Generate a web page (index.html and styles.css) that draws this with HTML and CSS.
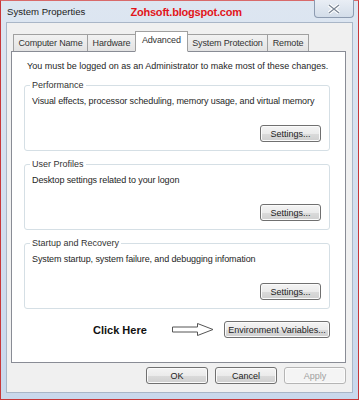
FILE: index.html
```html
<!DOCTYPE html>
<html>
    <head>
        <link rel="stylesheet" href="styles.css">
    </head>
    <body>
        <div class="window">
            <div class="titlebar">
                <span class="title">System Properties</span>
                <span class="brand">Zohsoft.blogspot.com</span>
                <span class="close">
                    <svg width="12" height="10" viewBox="0 0 12 10">
                        <path d="M1 1 L11 9 M11 1 L1 9" stroke="#fff" stroke-width="3.4"/>
                        <path d="M1 1 L11 9 M11 1 L1 9" stroke="#7a8594" stroke-width="1.2"/>
                    </svg>
                </span>
            </div>
            <div class="client">
                <!--tab strip-->
                <div class="tabs">
                    <span class="tab">Computer Name</span>
                    <span class="tab">Hardware</span>
                    <span class="tab active">Advanced</span>
                    <span class="tab">System Protection</span>
                    <span class="tab">Remote</span>
                </div>
                <div class="panel">
                    <p class="note">You must be logged on as an Administrator to make most of these changes.</p>
                    <fieldset class="group">
                        <legend>Performance</legend>
                        <p>Visual effects, processor scheduling, memory usage, and virtual memory</p>
                        <div class="right"><button class="btn">Settings...</button></div>
                    </fieldset>
                    <fieldset class="group">
                        <legend>User Profiles</legend>
                        <p>Desktop settings related to your logon</p>
                        <div class="right"><button class="btn">Settings...</button></div>
                    </fieldset>
                    <fieldset class="group">
                        <legend>Startup and Recovery</legend>
                        <p>System startup, system failure, and debugging infomation</p>
                        <div class="right"><button class="btn">Settings...</button></div>
                    </fieldset>
                    <div class="envrow">
                        <span class="click">Click Here</span>
                        <svg class="arrow" width="42" height="13" viewBox="0 0 42 13">
                            <path d="M0.5 4 H25.5 V0.5 L41 6.5 L25.5 12.5 V9 H0.5 Z" fill="#fff" stroke="#555" stroke-width="1"/>
                        </svg>
                        <button class="btn env">Environment Variables...</button>
                    </div>
                </div>
                <div class="footer">
                    <button class="btn big">OK</button>
                    <button class="btn big">Cancel</button>
                    <button class="btn big" disabled>Apply</button>
                </div>
            </div>
        </div>
    </body>
</html>
```

FILE: styles.css
```css
body {
    margin: 0px;
    background-color: white;
    font-family: "Liberation Sans", Arial, sans-serif;
    font-size: 9px;
    color: #1e1e1e;
}
.window {
    width: 359px;
    height: 400px;
    box-sizing: border-box;
    border: 1px solid #c8383a;
    border-top-color: #d86a6a;
    background: linear-gradient(#dde6f1, #c9d8ec);
    padding: 0px 5px 6px 5px;
    display: flex;
    flex-direction: column;
}
.titlebar {
    height: 21px;
    display: flex;
    align-items: center;
    position: relative;
}
.title {
    font-size: 9.6px;
    color: #222;
    margin-left: 1px;
}
.brand {
    margin-left: 45px;
    color: #e2151b;
    font-weight: bold;
    font-size: 11px;
    letter-spacing: -0.2px;
}
.close {
    position: absolute;
    right: -1px;
    top: -1px;
    width: 38px;
    height: 17px;
    border: 1px solid #8d9bb0;
    border-top: none;
    border-radius: 0px 0px 4px 4px;
    background: linear-gradient(#e9eef5, #d3dde9);
    display: flex;
    align-items: center;
    justify-content: center;
}
.client {
    flex: 1;
    background-color: #f0f0f0;
    border: 1px solid #a9b6c7;
    padding: 9px 6px 0px 4px;
    display: flex;
    flex-direction: column;
}
.tabs {
    display: flex;
    align-items: flex-end;
    padding-left: 2px;
    height: 19px;
    position: relative;
    z-index: 2;
}
.tab {
    height: 16px;
    line-height: 16px;
    padding: 0px 4.5px;
    letter-spacing: -0.15px;
    border: 1px solid #a0a0a0;
    border-bottom: none;
    border-left: none;
    background: linear-gradient(#f2f2f2, #e3e3e3);
    color: #333;
}
.tab:first-child {
    border-left: 1px solid #a0a0a0;
}
.tab.active {
    height: 19px;
    line-height: 17px;
    background: white;
    border-left: 1px solid #a0a0a0;
    margin-left: -1px;
    padding: 0px 6px;
    border-bottom: 1px solid white;
    margin-bottom: -1px;
}
.panel {
    height: 312px;
    box-sizing: border-box;
    background: white;
    border: 1px solid #898c95;
    padding: 8px 15px 0px 12px;
}
.note {
    margin: 0px 0px 8px 3px;
    line-height: 12px;
}
.group {
    margin: 0px 0px 8px 0px;
    border: 1px solid #d5dfe5;
    border-radius: 3px;
    padding: 3px 8px 8px 7px;
}
.group legend {
    padding: 0px 2px;
    margin-left: -2px;
    line-height: 10px;
    color: #333;
}
.group p {
    margin: 2px 0px 0px 0px;
    line-height: 12px;
    white-space: nowrap;
    letter-spacing: -0.1px;
}
.right {
    display: flex;
    justify-content: flex-end;
    margin-top: 18px;
}
.btn {
    font-family: "Liberation Sans", Arial, sans-serif;
    font-size: 9px;
    color: #222;
    height: 17px;
    padding: 0px;
    border: 1px solid #707070;
    border-radius: 3px;
    background: linear-gradient(#f4f4f4 0%, #ebebeb 50%, #dbdbdb 51%, #cfcfcf 100%);
    box-shadow: inset 0px 0px 0px 1px #fbfbfb;
}
.right .btn {
    width: 61px;
}
.envrow {
    display: flex;
    align-items: center;
    margin-top: 12px;
}
.click {
    margin-left: 69px;
    font-weight: bold;
    font-size: 11px;
    color: #111;
}
.arrow {
    margin-left: 25px;
}
.env {
    margin-left: auto;
    width: 106px;
}
.footer {
    display: flex;
    justify-content: flex-end;
    gap: 7px;
    padding-top: 4px;
}
.btn.big {
    width: 62px;
}
.btn[disabled] {
    color: #a0a0a0;
    border-color: #b5b5b5;
    background: #f4f4f4;
}
```
